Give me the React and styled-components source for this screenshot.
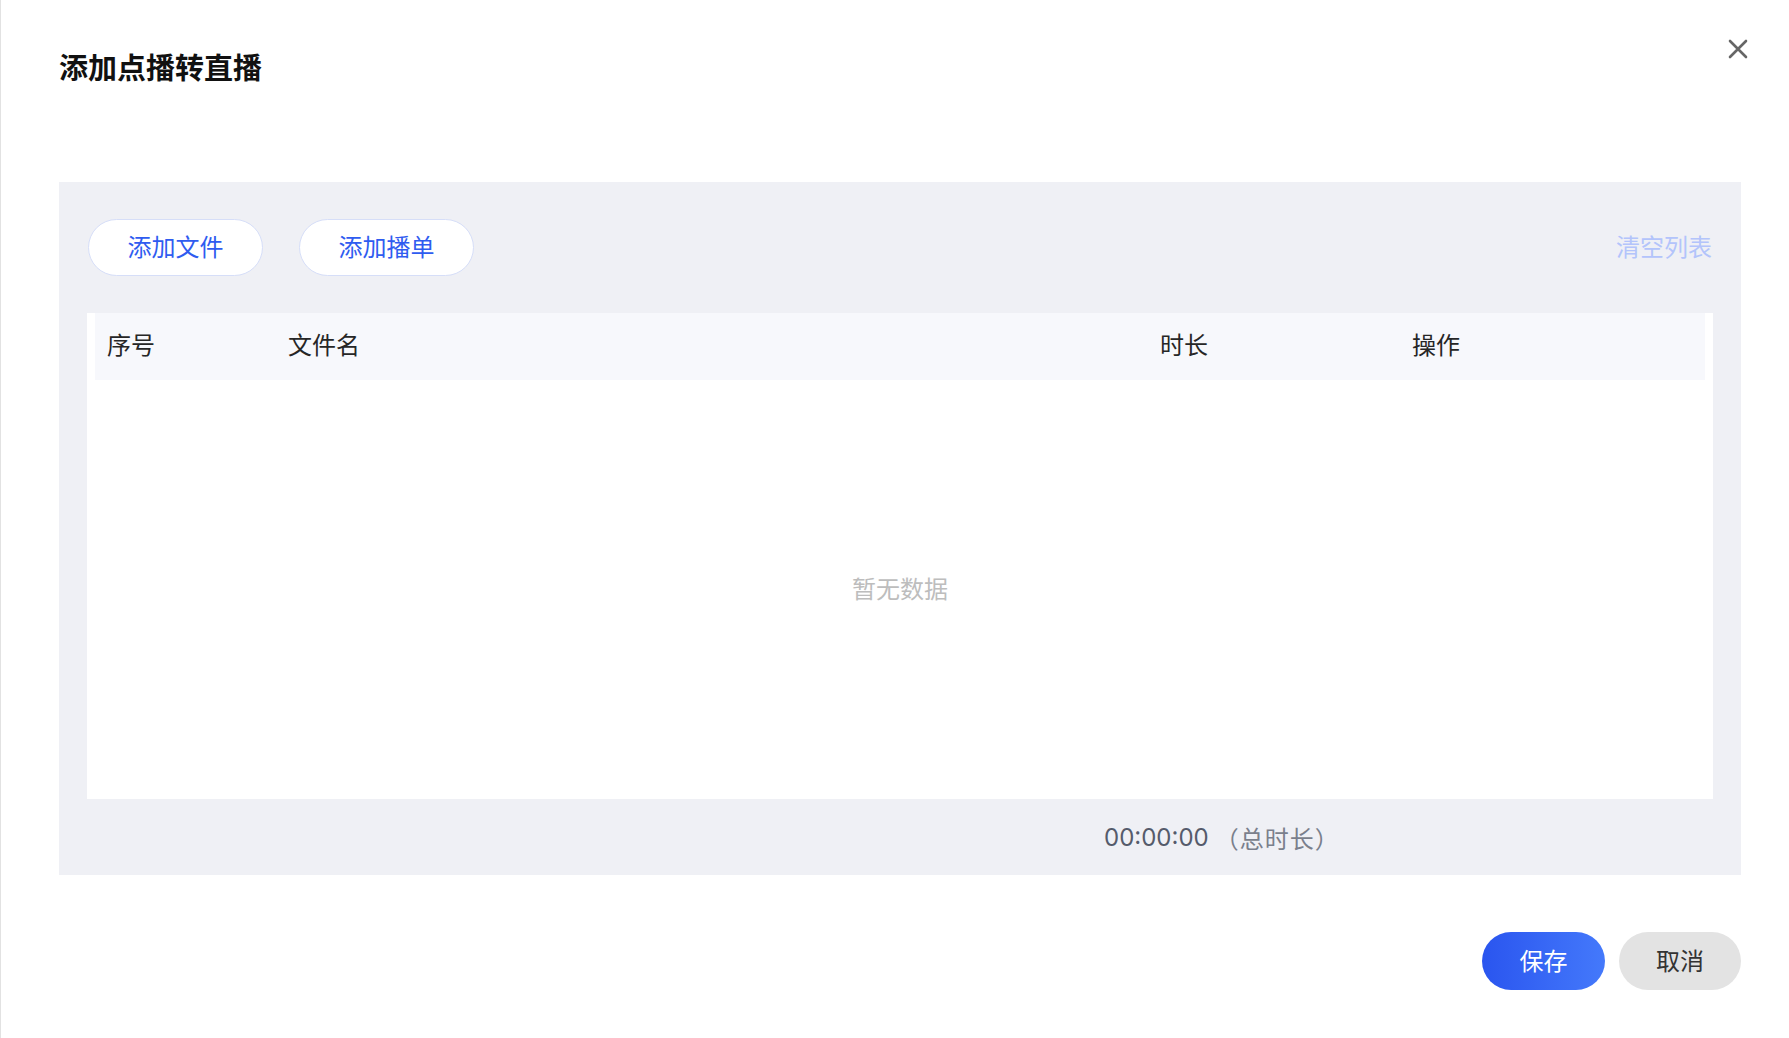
import React from "react";
import styled, { createGlobalStyle } from "styled-components";

const GlobalStyle = createGlobalStyle`
  html, body {
    margin: 0;
    padding: 0;
    background: #ffffff;
  }
  body {
    font-family: "Inter", "Noto Sans CJK SC", sans-serif;
  }
`;

const columns = [
  { key: "index", label: "序号" },
  { key: "name", label: "文件名" },
  { key: "duration", label: "时长" },
  { key: "action", label: "操作" },
];

function CloseIcon() {
  return (
    <svg width="20" height="20" viewBox="0 0 20 20">
      <path d="M2 2 L18 18 M18 2 L2 18" stroke="#666" strokeWidth="2.6" strokeLinecap="round" />
    </svg>
  );
}

export default function App() {
  return (
    <>
      <GlobalStyle />
      <Modal>
        <Header>
          <Title>添加点播转直播</Title>
          <CloseButton aria-label="close">
            <CloseIcon />
          </CloseButton>
        </Header>

        <Panel>
          <Toolbar>
            <ButtonGroup>
              <OutlineButton>添加文件</OutlineButton>
              <OutlineButton>添加播单</OutlineButton>
            </ButtonGroup>
            <ClearLink>清空列表</ClearLink>
          </Toolbar>

          <TableBox>
            <HeadRow>
              {columns.map((c) => (
                <HeadCell key={c.key}>{c.label}</HeadCell>
              ))}
            </HeadRow>
            <EmptyBody>暂无数据</EmptyBody>
          </TableBox>

          <Summary>
            <Total>00:00:00</Total>
            <TotalLabel>（总时长）</TotalLabel>
          </Summary>
        </Panel>

        <Actions>
          <PrimaryButton>保存</PrimaryButton>
          <GhostButton>取消</GhostButton>
        </Actions>
      </Modal>
    </>
  );
}

const Modal = styled.div`
  box-sizing: border-box;
  height: 1038px;
  border-left: 1px solid #e2e2e2;
  padding: 46px 48px 0 58px;
  display: flex;
  flex-direction: column;
`;

const Header = styled.div`
  position: relative;
  height: 40px;
  display: flex;
  align-items: center;
`;

const Title = styled.h1`
  margin: 0;
  font-size: 29px;
  line-height: 40px;
  font-weight: 700;
  color: #111;
  font-family: "Noto Sans CJK SC", sans-serif;
`;

const CloseButton = styled.button`
  position: absolute;
  right: -7px;
  top: -7px;
  width: 20px;
  height: 20px;
  padding: 0;
  border: none;
  background: transparent;
  cursor: pointer;
  display: flex;
`;

const Panel = styled.div`
  margin-top: 96px;
  background: #eff0f5;
  padding: 37px 28px 0 28px;
  display: flex;
  flex-direction: column;
`;

const Toolbar = styled.div`
  display: flex;
  align-items: center;
  justify-content: space-between;
  height: 57px;
  padding-right: 1px;
`;

const ButtonGroup = styled.div`
  display: flex;
  gap: 36px;
  padding-left: 1px;
`;

const OutlineButton = styled.button`
  box-sizing: border-box;
  width: 175px;
  height: 57px;
  padding: 0 0 4px;
  border-radius: 29px;
  border: 1px solid #d6def8;
  background: #fff;
  color: #2f5cf0;
  font-size: 24px;
  font-family: "Noto Sans CJK SC", sans-serif;
  cursor: pointer;
`;

const ClearLink = styled.span`
  color: #b3c4fb;
  font-size: 24px;
  padding-bottom: 4px;
  font-family: "Noto Sans CJK SC", sans-serif;
  cursor: pointer;
`;

const TableBox = styled.div`
  margin-top: 37px;
  background: #fff;
  padding: 0 8px;
  height: 486px;
  display: flex;
  flex-direction: column;
`;

const HeadRow = styled.div`
  display: grid;
  grid-template-columns: 181px 872px 252px 1fr;
  height: 67px;
  align-items: center;
  background: #f7f8fc;
`;

const HeadCell = styled.div`
  padding: 0 0 6px 12px;
  font-size: 24px;
  color: #262626;
  font-family: "Noto Sans CJK SC", sans-serif;
`;

const EmptyBody = styled.div`
  flex: 1;
  display: flex;
  align-items: center;
  justify-content: center;
  padding-bottom: 4px;
  color: #bdbdbd;
  font-size: 24px;
  font-family: "Noto Sans CJK SC", sans-serif;
`;

const Summary = styled.div`
  height: 76px;
  display: flex;
  align-items: center;
  padding-left: 1017px;
  color: #555b6b;
  font-size: 24px;
`;

const Total = styled.span`
  font-family: "Inter", sans-serif;
`;

const TotalLabel = styled.span`
  margin-left: 6px;
  color: #7a7f8c;
  font-family: "Noto Sans CJK SC", sans-serif;
  letter-spacing: 1px;
`;

const Actions = styled.div`
  margin-top: 57px;
  display: flex;
  justify-content: flex-end;
  gap: 14px;
`;

const PillButton = styled.button`
  width: 122px;
  height: 58px;
  padding: 0 0 4px;
  border-radius: 29px;
  border: none;
  font-size: 24px;
  font-family: "Noto Sans CJK SC", sans-serif;
  cursor: pointer;
`;

const PrimaryButton = styled(PillButton)`
  width: 123px;
  color: #fff;
  background: linear-gradient(90deg, #2a55ef 0%, #4479fb 100%);
`;

const GhostButton = styled(PillButton)`
  color: #333;
  background: #e3e3e3;
`;
